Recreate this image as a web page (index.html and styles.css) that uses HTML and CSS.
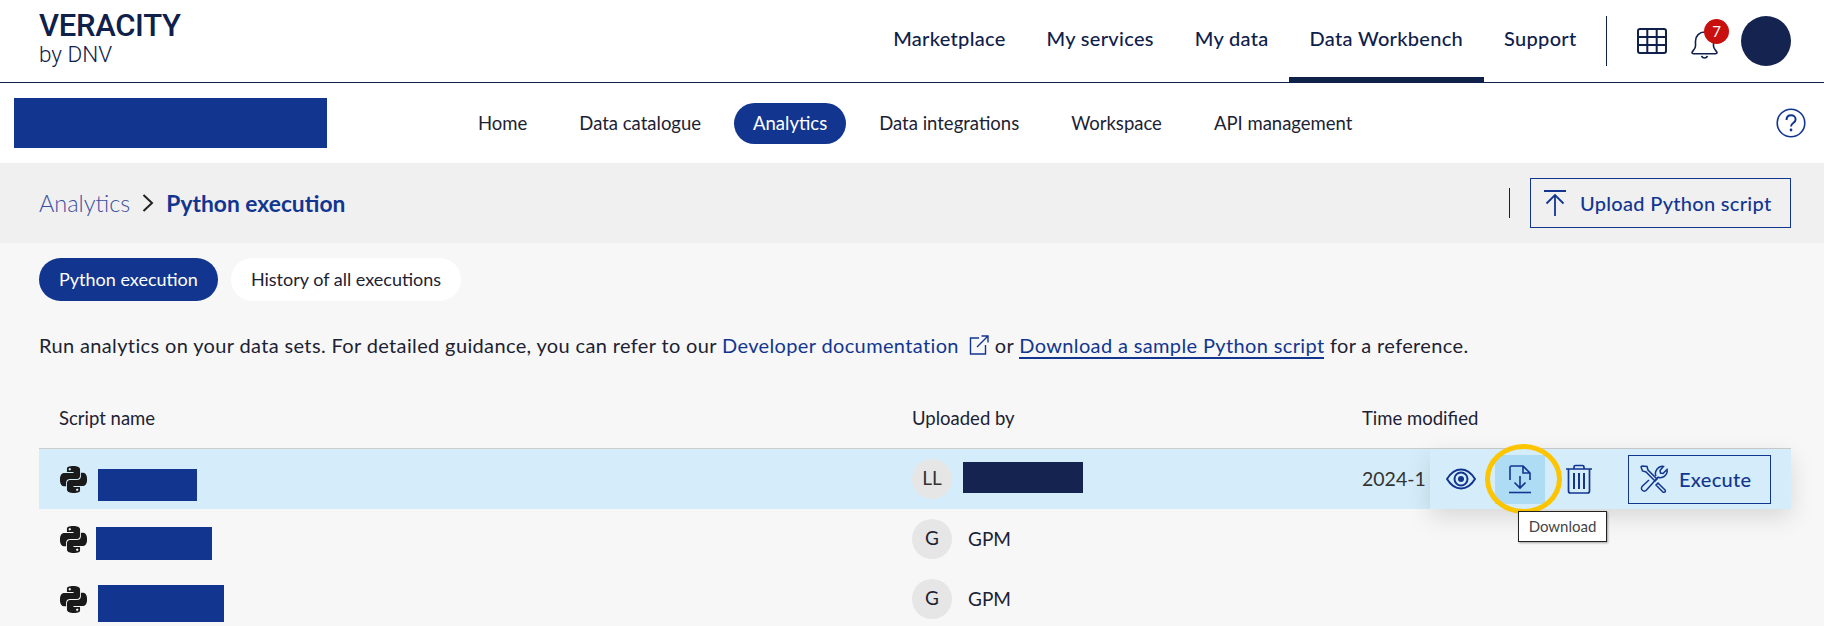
FILE: index.html
```html
<!DOCTYPE html>
<html lang="en">
<head>
    <meta charset="UTF-8">
    <title>Python execution</title>
    <link rel="stylesheet" href="styles.css">
</head>
<body>
    <header class="top-bar">
        <a class="logo">
            <span class="logo-name">VERACITY</span>
            <span class="logo-by">by DNV</span>
        </a>
        <nav class="top-nav">
            <a>Marketplace</a>
            <a>My services</a>
            <a>My data</a>
            <a class="active">Data Workbench</a>
            <a>Support</a>
        </nav>
        <div class="top-divider"></div>
        <svg class="grid-icon" width="30" height="26" viewBox="0 0 30 26" fill="none" stroke="#0f204b" stroke-width="2">
            <rect x="1" y="1" width="28" height="24" rx="2"/>
            <path d="M10.3 1v24M19.7 1v24M1 9h28M1 17h28"/>
        </svg>
        <div class="bell">
            <svg width="27" height="30" viewBox="0 0 27 30" fill="none" stroke="#0f204b" stroke-width="1.6">
                <path d="M1 23.5c0-1.5 3.5-3 3.5-6.5v-5c0-5 4-9 9-9s9 4 9 9v5c0 3.500 3.500 5 3.500 6.500 0 .8-.7 1.200-1.500 1.200h-22c-.8 0-1.500-.4-1.500-1.200z"/>
                <path d="M10.500 27c.8 1.500 1.800 2 3 2s2.200-.5 3-2"/>
            </svg>
            <span class="badge">7</span>
        </div>
        <div class="avatar"></div>
    </header>

    <div class="sub-bar">
        <div class="brand-block"></div>
        <nav class="sub-nav">
            <a>Home</a>
            <a>Data catalogue</a>
            <a class="active">Analytics</a>
            <a>Data integrations</a>
            <a>Workspace</a>
            <a>API management</a>
        </nav>
        <svg class="help-icon" width="30" height="30" viewBox="0 0 30 30" fill="none" stroke="#123690" stroke-width="1.6">
            <circle cx="15" cy="15" r="13.800"/>
            <path d="M10.500 12c0-3 2-4.800 4.600-4.800s4.500 1.800 4.500 4.200c0 3.600-4.600 3.600-4.600 7" stroke-width="2"/>
            <circle cx="15" cy="22" r="1.400" fill="#123690" stroke="none"/>
        </svg>
    </div>

    <div class="page-head">
        <div class="crumbs">
            <a class="crumb-link">Analytics</a>
            <svg class="crumb-sep" width="12" height="18" viewBox="0 0 12 18" fill="none" stroke="#222" stroke-width="2"><path d="M1.500 1l8.500 8-8.500 8"/></svg>
            <span class="crumb-here">Python execution</span>
        </div>
        <div class="head-divider"></div>
        <button class="outline-btn upload-btn">
            <svg width="22" height="26" viewBox="0 0 22 26" fill="none" stroke="#123690" stroke-width="1.800">
                <path d="M0 1h22M11 26V5M2.500 13.500L11 5l8.500 8.500"/>
            </svg>
            Upload Python script
        </button>
    </div>

    <main class="content">
        <div class="tabs">
            <a class="tab active">Python execution</a>
            <a class="tab">History of all executions</a>
        </div>

        <p class="intro">Run analytics on your data sets. For detailed guidance, you can refer to our <a class="doc-link">Developer documentation</a><svg class="ext-icon" width="20" height="20" viewBox="0 0 20 20" fill="none" stroke="#123690" stroke-width="1.400"><path d="M10 3H1.500v16h15v-9M8 12L19 1M12.500 1H19v6.500"/></svg>or <a class="sample-link">Download a sample Python script</a> for a reference.</p>

        <div class="table-row table-head">
            <div>Script name</div>
            <div>Uploaded by</div>
            <div>Time modified</div>
        </div>

        <div class="table-row script-row selected">
            <div class="name-cell">
                <svg class="py-icon" viewBox="0 0 24 24"><use href="#py"/></svg>
                <span class="name-block name-1"></span>
            </div>
            <div class="user-cell">
                <span class="initials">LL</span>
                <span class="user-block"></span>
            </div>
            <div class="time-cell">2024-1</div>

            <div class="row-actions">
                <span class="icon-btn">
                    <svg width="30" height="22" viewBox="0 0 30 22" fill="none" stroke="#123690" stroke-width="2">
                        <path d="M1 11C5 4.500 9.500 1.500 15 1.500S25 4.500 29 11c-4 6.500-8.500 9.500-14 9.500S5 17.500 1 11z"/>
                        <circle cx="15" cy="11" r="6.500"/>
                        <circle cx="15" cy="11" r="3" fill="#123690" stroke="none"/>
                    </svg>
                </span>
                <span class="icon-btn focused">
                    <svg width="22" height="29" viewBox="0 0 22 29" fill="none" stroke="#123690" stroke-width="1.600">
                        <path d="M1 15V2.500C1 1.500 1.700 1 2.500 1H14l7 7v7M14 1v7h7"/>
                        <path d="M11 11v12M5.500 17.500L11 23l5.500-5.500"/>
                        <path d="M0 27.500h22"/>
                    </svg>
                    <span class="focus-ring"></span>
                    <span class="tooltip">Download</span>
                </span>
                <span class="icon-btn">
                    <svg width="26" height="30" viewBox="0 0 26 30" fill="none" stroke="#123690" stroke-width="1.700">
                        <path d="M0 5h26M8 5V3c0-1 .6-1.500 1.500-1.500h7c.9 0 1.500.5 1.500 1.500v2"/>
                        <path d="M2.500 5v22c0 1.300.8 2 2 2h17c1.200 0 2-.7 2-2V5"/>
                        <path d="M8 9v16M13 9v16M18 9v16" stroke-width="2"/>
                    </svg>
                </span>
                <button class="outline-btn execute-btn">
                    <svg width="28" height="28" viewBox="0 0 28 28" fill="none" stroke="#123690" stroke-width="1.500">
                        <path d="M2 1L1 2l1.500 4L6 7l9 9 2-2-9-9-1-3.500z"/>
                        <path d="M16 11c-1.500-3 0-7 3.500-9 1.500-.7 3-.8 4-.5L20 5.500l.5 2.500 2.500.5 4-4c.4 1.500.2 3.200-.7 4.700-1.800 3-5.500 4.300-8.300 3L6.500 25c-1.300 1.400-3 1.400-4.200.3-1.200-1.200-1.200-3 .2-4.300L9 15"/>
                        <path d="M18 18l6.800 6.800c.8.800.8 1.700 0 2.200-.6.500-1.500.500-2.200-.2L16 20z"/>
                    </svg>
                    Execute
                </button>
            </div>
        </div>

        <div class="table-row script-row">
            <div class="name-cell">
                <svg class="py-icon" viewBox="0 0 24 24"><use href="#py"/></svg>
                <span class="name-block name-2"></span>
            </div>
            <div class="user-cell">
                <span class="initials">G</span>
                <span class="user-name">GPM</span>
            </div>
            <div></div>
        </div>

        <div class="table-row script-row">
            <div class="name-cell">
                <svg class="py-icon" viewBox="0 0 24 24"><use href="#py"/></svg>
                <span class="name-block name-3"></span>
            </div>
            <div class="user-cell">
                <span class="initials">G</span>
                <span class="user-name">GPM</span>
            </div>
            <div></div>
        </div>
    </main>

    <svg width="0" height="0" class="defs">
        <symbol id="py" viewBox="0 0 24 24">
            <path fill="#1a1a1a" d="M14.250.18l.9.2.73.26.59.3.45.32.34.34.25.34.16.33.1.3.04.26.02.2-.01.13V8.500l-.05.63-.13.55-.21.46-.26.38-.3.31-.33.25-.35.19-.35.14-.33.1-.3.07-.26.04-.21.02H8.770l-.69.05-.59.14-.5.22-.41.27-.33.32-.27.35-.2.36-.15.37-.1.35-.07.32-.04.27-.02.21v3.060H3.170l-.21-.03-.28-.07-.32-.12-.35-.18-.36-.26-.36-.36-.35-.46-.32-.59-.28-.73-.21-.88-.14-1.050-.05-1.230.06-1.220.16-1.040.24-.87.32-.71.36-.57.4-.44.42-.33.42-.24.4-.16.36-.1.32-.05.24-.01h.16l.06.01h8.160v-.83H6.180l-.01-2.750-.02-.37.05-.34.11-.31.17-.28.25-.26.31-.23.38-.2.44-.18.51-.15.58-.12.64-.1.71-.06.77-.04.84-.02 1.270.05zm-6.300 1.980l-.23.33-.08.41.08.41.23.34.33.22.41.09.41-.09.33-.22.23-.34.08-.41-.08-.41-.23-.33-.33-.22-.41-.09-.41.09zm13.090 3.950l.28.06.32.12.35.18.36.27.36.35.35.47.32.59.28.73.21.88.14 1.040.05 1.230-.06 1.230-.16 1.040-.24.86-.32.71-.36.57-.4.45-.42.33-.42.24-.4.16-.36.09-.32.05-.24.02-.16-.01h-8.220v.82h5.840l.01 2.760.02.36-.05.34-.11.31-.17.29-.25.25-.31.24-.38.2-.44.17-.51.15-.58.13-.64.09-.71.07-.77.04-.84.01-1.270-.04-1.070-.14-.9-.2-.73-.25-.59-.3-.45-.33-.34-.34-.25-.34-.16-.33-.1-.3-.04-.25-.02-.2.01-.13v-5.340l.05-.64.13-.54.21-.46.26-.38.3-.32.33-.24.35-.2.35-.14.33-.1.3-.06.26-.04.21-.02.13-.01h5.840l.69-.05.59-.14.5-.21.41-.28.33-.32.27-.35.2-.36.15-.36.1-.35.07-.32.04-.28.02-.21V6.070h2.090l.14.01zm-6.470 14.250l-.23.33-.08.41.08.41.23.33.33.23.41.08.41-.08.33-.23.23-.33.08-.41-.08-.41-.23-.33-.33-.23-.41-.08-.41.08z"/>
        </symbol>
    </svg>
</body>
</html>
```

FILE: styles.css
```css
body {
    margin: 0;
    height: 626px;
    overflow: hidden;
    background: #f7f7f7;
    color: #1c2233;
    font-family: Lato, "Noto Sans", sans-serif;
    font-size: 18px;
}

.defs {
    position: absolute;
}

/* top bar */
.top-bar {
    display: flex;
    align-items: center;
    height: 82px;
    padding: 0 33px 0 39px;
    background: #fff;
    border-bottom: 1px solid #0f204b;
}

.logo {
    display: flex;
    flex-direction: column;
    color: #0f204b;
    font-family: Roboto, sans-serif;
    margin-top: -5px;
}

.logo-name {
    font-size: 31px;
    line-height: 30px;
    font-weight: 500;
    letter-spacing: -0.3px;
}

.logo-by {
    font-size: 22.5px;
    line-height: 26px;
    font-weight: 300;
}

.top-nav {
    display: flex;
    margin-left: auto;
}

.top-nav a {
    display: flex;
    align-items: center;
    height: 75px;
    padding: 0 20.5px 2px;
    border-bottom: 5px solid transparent;
    color: #0f204b;
    font-size: 20px;
    font-weight: 500;
    letter-spacing: 0.3px;
}

.top-nav a.active {
    border-bottom-color: #0f204b;
}

.top-divider {
    width: 1px;
    height: 50px;
    margin: 0 30px 0 9px;
    background: #0f204b;
}

.bell {
    position: relative;
    width: 27px;
    height: 30px;
    margin: 6px 23px 0 24px;
}

.badge {
    position: absolute;
    top: -10px;
    left: 13px;
    width: 25px;
    height: 25px;
    border-radius: 50%;
    background: #c8100f;
    color: #fff;
    font-size: 15px;
    line-height: 25px;
    text-align: center;
}

.avatar {
    width: 50px;
    height: 50px;
    border-radius: 50%;
    background: #14234f;
}

/* second bar */
.sub-bar {
    display: flex;
    align-items: center;
    height: 80px;
    padding: 0 18px 0 14px;
    background: #fff;
}

.brand-block {
    width: 313px;
    height: 50px;
    margin-right: 132px;
    background: #123690;
}

.sub-nav {
    display: flex;
    gap: 14px;
}

.sub-nav a {
    display: flex;
    align-items: center;
    height: 41px;
    padding: 0 19px;
    border-radius: 21px;
    color: #1c2233;
    font-size: 18.5px;
}

.sub-nav a.active {
    background: #123690;
    color: #fff;
}

.help-icon {
    margin-left: auto;
}

/* page head */
.page-head {
    display: flex;
    align-items: center;
    height: 80px;
    padding: 0 33px 0 39px;
    background: #f0f0f0;
}

.crumbs {
    display: flex;
    align-items: center;
    gap: 12px;
    font-size: 23.5px;
}

.crumb-link {
    color: #3c50a0;
    font-weight: 300;
}

.crumb-here {
    color: #123690;
    font-weight: 700;
    font-size: 22.8px;
}

.head-divider {
    width: 1px;
    height: 30px;
    margin: 0 20px 0 auto;
    background: #0f204b;
}

.outline-btn {
    display: flex;
    align-items: center;
    border: 1px solid #123690;
    background: transparent;
    color: #123690;
    font-family: inherit;
    font-size: 20px;
    font-weight: 500;
    letter-spacing: 0.3px;
    padding: 0;
}

.upload-btn {
    gap: 14px;
    width: 261px;
    height: 50px;
    padding-left: 13px;
}

/* content */
.content {
    padding: 15px 33px 0 39px;
}

.tabs {
    display: flex;
    gap: 13px;
}

.tab {
    display: flex;
    align-items: center;
    height: 42px;
    padding: 0 20px 1px;
    border-radius: 22px;
    background: #fff;
    font-size: 18px;
    color: #1c2233;
}

.tab.active {
    background: #123690;
    color: #fff;
}

.intro {
    height: 24px;
    margin: 32px 0 0;
    font-size: 20px;
    line-height: 24px;
    letter-spacing: 0.36px;
    white-space: nowrap;
}

.doc-link {
    color: #123690;
}

.ext-icon {
    margin: 0 6px 0 10px;
    vertical-align: -2px;
}

.sample-link {
    color: #123690;
    border-bottom: 2px solid #123690;
}

.table-row {
    position: relative;
    display: grid;
    grid-template-columns: 853px 450px 1fr;
    align-items: center;
    padding-left: 20px;
}

.table-head {
    height: 52px;
    margin-top: 40px;
    box-sizing: border-box;
    border-bottom: 1px solid #ccc;
    padding-bottom: 9px;
    font-size: 18.5px;
}

.script-row {
    height: 60px;
}

.script-row.selected {
    background: #d5edfa;
    color: #333;
}

.time-cell {
    padding-bottom: 2px;
    font-size: 19.5px;
}

.name-cell {
    display: flex;
    align-items: center;
}

.py-icon {
    width: 27px;
    height: 27px;
    margin-left: 1px;
}

.name-block {
    background: #123690;
}

.name-1 {
    width: 99px;
    height: 32px;
    margin: 12px 0 0 11px;
}

.name-2 {
    width: 116px;
    height: 33px;
    margin: 9px 0 0 9px;
}

.name-3 {
    width: 126px;
    height: 37px;
    margin: 9px 0 0 11px;
}

.user-cell {
    display: flex;
    align-items: center;
}

.initials {
    width: 40px;
    height: 40px;
    border-radius: 50%;
    background: #e6e6e6;
    font-size: 19px;
    line-height: 38px;
    text-align: center;
}

.user-block {
    width: 120px;
    height: 31px;
    margin: -4px 0 0 11px;
    background: #14234f;
}

.user-name {
    margin-left: 16px;
    padding-bottom: 2px;
    font-size: 19px;
}

.row-actions {
    position: absolute;
    top: 0;
    right: 0;
    bottom: 0;
    display: flex;
    align-items: center;
    gap: 9px;
    padding: 0 20px 0 6px;
    background: #d5edfa;
    box-shadow: 0 8px 24px rgba(0, 0, 0, 0.13);
}

.icon-btn {
    position: relative;
    display: flex;
    align-items: center;
    justify-content: center;
    width: 50px;
    height: 49px;
}

.icon-btn.focused {
    background: #afdcf5;
}

.focus-ring {
    position: absolute;
    top: -11px;
    left: -10px;
    width: 77px;
    height: 70px;
    box-sizing: border-box;
    border: 5px solid #fdc400;
    border-radius: 50%;
}

.tooltip {
    position: absolute;
    top: 56px;
    left: 23px;
    z-index: 2;
    width: 89px;
    height: 31px;
    box-sizing: border-box;
    border: 1px solid #222;
    background: #fff;
    box-shadow: 1px 1px 2px rgba(0, 0, 0, 0.35);
    color: #444;
    font-size: 15px;
    line-height: 29px;
    text-align: center;
}

.execute-btn {
    gap: 11px;
    width: 143px;
    height: 49px;
    margin-left: 15px;
    padding-left: 11px;
    box-sizing: border-box;
}
```
